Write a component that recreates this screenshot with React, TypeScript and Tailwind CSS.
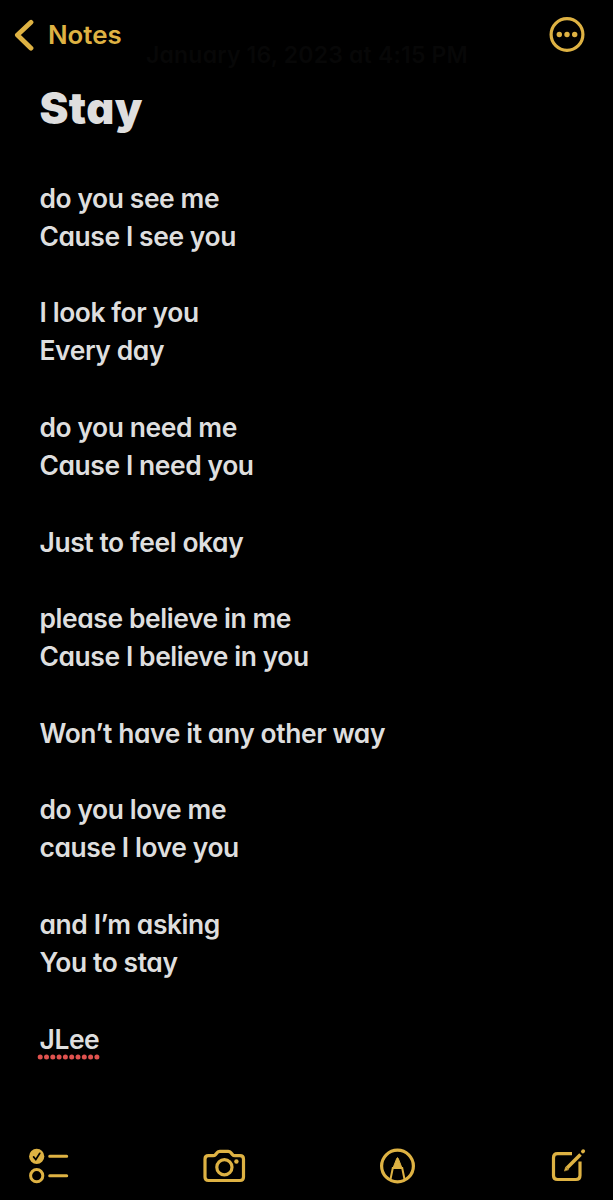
import React from "react";

const stanzas: string[][] = [
  ["do you see me", "Cause I see you"],
  ["I look for you", "Every day"],
  ["do you need me", "Cause I need you"],
  ["Just to feel okay"],
  ["please believe in me", "Cause I believe in you"],
  ["Won’t have it any other way"],
  ["do you love me", "cause I love you"],
  ["and I’m asking", "You to stay"],
];

function Header() {
  return (
    <header className="relative flex h-[70px] items-center justify-between pl-[14px] pr-[27px] text-[#deb243]">
      <button className="flex items-center" aria-label="Back to Notes">
        <svg width="20" height="34" viewBox="0 0 20 34" fill="none" stroke="currentColor" strokeWidth="4.8" strokeLinecap="round" strokeLinejoin="round">
          <path d="M17 4.3 3.4 17 17 30.2" />
        </svg>
        <span className="ml-[14px] text-[25.8px] font-[560] leading-8">Notes</span>
      </button>
      <button aria-label="More">
        <svg width="38" height="38" viewBox="0 0 38 38" fill="none">
          <circle cx="19" cy="18.5" r="15.9" stroke="currentColor" strokeWidth="3.2" />
          <g fill="currentColor">
            <circle cx="11.3" cy="18.5" r="2.7" />
            <circle cx="19" cy="18.5" r="2.7" />
            <circle cx="26.7" cy="18.5" r="2.7" />
          </g>
        </svg>
      </button>
      {/* date line, almost faded out behind the bar */}
      <p className="absolute left-[146px] top-[41px] whitespace-nowrap text-[23px] font-semibold leading-7 tracking-[0.2px] text-[#070707] [font-feature-settings:'cv11']">
        January 16, 2023 at 4:15 PM
      </p>
    </header>
  );
}

function Toolbar() {
  return (
    <footer className="flex h-[68px] items-center justify-between pl-[28px] pr-[26px] text-[#deb243]">
      <button aria-label="Checklist">
        <svg width="42" height="38" viewBox="0 0 42 38" fill="none" stroke="currentColor" strokeWidth="3" strokeLinecap="round">
          <circle cx="8.7" cy="9.4" r="7.6" fill="currentColor" stroke="none" />
          <path d="m5.6 9.9 2.2 2.6 4-6.2" stroke="#000" strokeWidth="1.7" />
          <circle cx="8.7" cy="28.7" r="6.1" />
          <path d="M21.7 9.3h17M21.7 28.7h17" />
        </svg>
      </button>
      <button aria-label="Camera">
        <svg width="44" height="38" viewBox="0 0 44 38" fill="none" stroke="currentColor" strokeWidth="3.2" strokeLinejoin="round">
          <path d="M6.500 8.700h4.700c1 0 1.700-.4 2.300-1.100l1.700-2c.7-.9 1.500-1.300 2.600-1.300h8.400c1.100 0 1.900.4 2.600 1.300l1.700 2c.6.7 1.300 1.100 2.300 1.100H38c2.100 0 3.500 1.400 3.500 3.500v17.800c0 2.100-1.400 3.500-3.500 3.500H6.500c-2.100 0-3.500-1.400-3.500-3.500V12.200c0-2.100 1.400-3.500 3.500-3.500Z" />
          <circle cx="22.400" cy="20.300" r="7.600" />
          <circle cx="34.400" cy="14.500" r="2.200" fill="currentColor" stroke="none" />
        </svg>
      </button>
      <button aria-label="Markup">
        <svg width="38" height="38" viewBox="0 0 38 38" fill="none" stroke="currentColor">
          <circle cx="18.500" cy="19" r="15.900" strokeWidth="3.200" />
          <path d="m11.500 32.300 2.300-11.300h9.400l2.300 11.300" strokeWidth="2" />
          <path d="M14 21 17.800 11.300q.7-1.300 1.400 0L23 21Z" fill="currentColor" strokeWidth="1" />
        </svg>
      </button>
      <button aria-label="New note">
        <svg width="38" height="38" viewBox="0 0 38 38" fill="none" stroke="currentColor" strokeWidth="3.2" strokeLinecap="round">
          <path d="M23 6.700H8.500c-2.500 0-4 1.500-4 4v17.800c0 2.500 1.500 4 4 4H27c2.500 0 4-1.500 4-4V14.500" strokeLinecap="butt" />
          <path d="m18 21 13.500-13.500" strokeWidth="3.600" strokeLinecap="butt" />
          <path d="m15.500 23.700 1.200-3.800 2.600 2.600Z" fill="currentColor" strokeWidth="0.600" />
          <path d="m33.900 4.500.3-.3" strokeWidth="3.800" />
        </svg>
      </button>
    </footer>
  );
}

export default function App() {
  return (
    <div className="flex h-[1200px] w-[613px] flex-col overflow-hidden bg-black font-['Inter',sans-serif] text-[#dedede]">
      <Header />
      <main className="flex-1 pl-[39.5px] [font-feature-settings:'cv11']">
        <h1 className="mt-[11px] text-[43.5px] font-black leading-[54px] tracking-[0.4px]">Stay</h1>
        <div className="mt-[43.5px] flex flex-col gap-[38.23px] text-[26.4px] font-[570] leading-[38.23px] tracking-[-0.4px]">
          {stanzas.map((lines) => (
            <div key={lines[0]}>
              {lines.map((line) => (
                <p key={line}>{line}</p>
              ))}
            </div>
          ))}
          <p className="relative">
            JLee
            <svg className="absolute -left-[2.5px] top-[34px]" width="64" height="6" viewBox="0 0 64 6" fill="#e0524f">
              {Array.from({ length: 10 }, (_, i) => (
                <circle key={i} cx={3.2 + i * 6.3} cy="3" r="2.5" />
              ))}
            </svg>
          </p>
        </div>
      </main>
      <Toolbar />
    </div>
  );
}
